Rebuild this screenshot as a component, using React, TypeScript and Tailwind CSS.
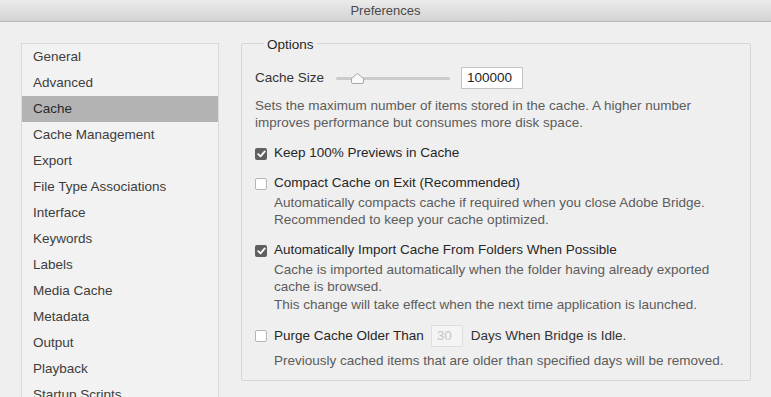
import { memo } from "react";

const sections = [
  "General",
  "Advanced",
  "Cache",
  "Cache Management",
  "Export",
  "File Type Associations",
  "Interface",
  "Keywords",
  "Labels",
  "Media Cache",
  "Metadata",
  "Output",
  "Playback",
  "Startup Scripts",
];

function Check({ on }: { on?: boolean }) {
  if (on) {
    return (
      <span className="flex h-[12px] w-[12px] shrink-0 items-center justify-center rounded-[2px] bg-[#5f5f5f]">
        <svg width="9" height="8" viewBox="0 0 9 8">
          <path d="M1.2 4.2 L3.5 6.4 L7.8 1.4" fill="none" stroke="#fff" strokeWidth="1.8" strokeLinecap="round" strokeLinejoin="round" />
        </svg>
      </span>
    );
  }
  return <span className="h-[12px] w-[12px] shrink-0 rounded-[2px] border border-[#b4b4b4] bg-white" />;
}

function Option({ on, label, className, children }: { on?: boolean; label: string; className?: string; children?: React.ReactNode }) {
  return (
    <div className={className}>
      <div className="flex h-[19px] items-center gap-[7px]">
        <Check on={on} />
        <span className="text-[#262626]">{label}</span>
      </div>
      {children && <div className="mt-[1px] pl-[19px] leading-[17px] text-[#5c5c5c]">{children}</div>}
    </div>
  );
}

function App() {
  return (
    <div className="h-[397px] w-[771px] overflow-hidden bg-[#efefef] text-[13.5px] font-['Liberation_Sans',Arial,sans-serif]">
      <div className="flex h-[22px] items-center justify-center border-b border-[#b9b9b9] bg-gradient-to-b from-[#ebebeb] to-[#d4d4d4] text-[13px] text-[#4a4a4a]">
        Preferences
      </div>

      <div className="flex gap-[22px] pl-[21px] pr-[20px] pt-[21px]">
        <ul className="h-[400px] w-[198px] shrink-0 border border-[#d9d9d9] bg-[#f2f2f2] text-[#3d3d3d]">
          {sections.map((s) => (
            <li
              key={s}
              className={"flex h-[26px] items-center pl-[11px] pt-[1px] " + (s === "Cache" ? "bg-[#b3b3b3] text-[#2a2a2a]" : "")}
            >
              {s}
            </li>
          ))}
        </ul>

        <fieldset className="-mt-[10px] h-[348px] flex-1 rounded-[2px] border border-[#d6d6d6] px-[13px]">
          <legend className="ml-[9px] px-[3px] pt-[4px] leading-[16px] text-[#262626]">Options</legend>

          <div className="mt-[14px] flex h-[22px] items-center">
            <span className="text-[#333]">Cache Size</span>
            <div className="relative ml-[12px] flex h-[22px] w-[114px] items-center">
              <div className="h-[3px] w-full rounded-full bg-[#cbcbcb]" />
              <svg className="absolute left-[14px] top-[4px]" width="15" height="14" viewBox="0 0 15 14">
                <path d="M1.5 7.5 L7.5 2.5 L13.5 7.5 L13.5 11 Q13.5 12.5 12 12.5 L3 12.5 Q1.5 12.5 1.5 11 Z" fill="#fafafa" stroke="#a8a8a8" strokeWidth="1" strokeLinejoin="round" />
              </svg>
            </div>
            <div className="ml-[11px] flex h-[22px] w-[62px] items-center border border-[#c3c3c3] bg-white pl-[5px] text-[#1f1f1f]">
              100000
            </div>
          </div>

          <p className="mt-[8px] leading-[17px] text-[#5c5c5c]">
            Sets the maximum number of items stored in the cache. A higher number
            <br />
            improves performance but consumes more disk space.
          </p>

          <Option on label="Keep 100% Previews in Cache" className="mt-[13px]" />
          <Option label="Compact Cache on Exit (Recommended)" className="mt-[11px]">
            Automatically compacts cache if required when you close Adobe Bridge.
            <br />
            Recommended to keep your cache optimized.
          </Option>
          <Option on label="Automatically Import Cache From Folders When Possible" className="mt-[13px]">
            Cache is imported automatically when the folder having already exported
            <br />
            cache is browsed.
            <div className="mt-[1px]">This change will take effect when the next time application is launched.</div>
          </Option>

          <div className="mt-[12px] flex h-[22px] items-center">
            <Check />
            <span className="ml-[7px] text-[#262626]">Purge Cache Older Than</span>
            <div className="ml-[7px] flex h-[22px] w-[32px] items-center border border-[#dedede] bg-[#f4f4f4] pl-[5px] text-[#c6c6c6]">
              30
            </div>
            <span className="ml-[8px] text-[#333]">Days When Bridge is Idle.</span>
          </div>
          <p className="mt-[5px] pl-[19px] leading-[17px] text-[#5c5c5c]">
            Previously cached items that are older than specified days will be removed.
          </p>
        </fieldset>
      </div>
    </div>
  );
}

export default memo(App);
